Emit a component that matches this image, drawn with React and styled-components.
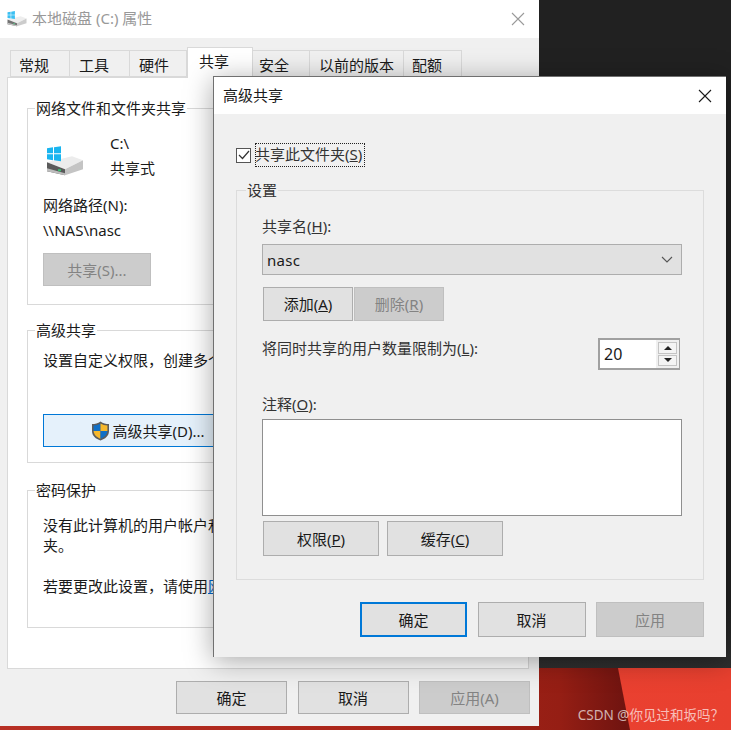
import React from "react";
import styled, { createGlobalStyle } from "styled-components";

const GlobalStyle = createGlobalStyle`
  html, body {
    margin: 0;
    padding: 0;
    background: #222;
  }
  * {
    box-sizing: border-box;
  }
`;

const Desktop = styled.div`
  position: relative;
  width: 731px;
  height: 730px;
  overflow: hidden;
  display: flex;
  flex-direction: column;
  justify-content: flex-end;
  background: linear-gradient(180deg, #212121 0, #212121 600px, #2f2f2f 668px);
  font-family: "Noto Sans", "Noto Sans CJK SC", sans-serif;
  font-size: 15px;
  line-height: 20px;
  color: #1a1a1a;
`;

const RedBand = styled.div`
  position: relative;
  height: 62px;
  background: linear-gradient(90deg, #b83025 0, #a92519 400px, #951e14 560px, #701410 625px);

  &::after {
    content: "";
    position: absolute;
    inset: 0;
    background: linear-gradient(90deg, #f44336, #e8402f);
    clip-path: polygon(618px 0, 100% 0, 100% 100%, 630px 100%);
  }
`;

const Watermark = styled.div`
  position: absolute;
  right: 7px;
  bottom: 5px;
  z-index: 3;
  font-size: 13.5px;
  white-space: nowrap;
  color: rgba(255, 255, 255, 0.68);
`;

const PropertiesWindow = styled.section`
  position: absolute;
  left: 0;
  top: 0;
  z-index: 1;
  width: 539px;
  height: 726px;
  display: flex;
  flex-direction: column;
  background: #f0f0f0;
`;

const AdvancedWindow = styled.section`
  position: absolute;
  left: 213px;
  top: 76px;
  z-index: 2;
  width: 513px;
  height: 581px;
  display: flex;
  flex-direction: column;
  background: #f0f0f0;
  border-left: 1px solid #707070;
  border-top: 1px solid #707070;
  box-shadow: 0 4px 26px rgba(0, 0, 0, 0.35);
`;

const TitleBar = styled.header`
  flex: none;
  height: ${(p) => p.$height}px;
  display: flex;
  align-items: center;
  gap: 5px;
  padding: 0 14px 0 ${(p) => p.$left}px;
  background: #fff;
  color: ${(p) => (p.$inactive ? "#999" : "#1a1a1a")};
`;

const TitleText = styled.span`
  flex: 1;
  margin-bottom: 2px;
`;

const CloseIcon = styled.svg`
  flex: none;
  width: 14px;
  height: 14px;
  stroke: ${(p) => (p.$inactive ? "#9a9a9a" : "#1a1a1a")};
  stroke-width: 1.1;
  fill: none;
`;

const TabStrip = styled.nav`
  flex: none;
  position: relative;
  z-index: 1;
  height: 31px;
  margin: 9px 0 0 10px;
  display: flex;
  align-items: flex-start;
`;

const Tab = styled.div`
  width: ${(p) => p.$width}px;
  height: ${(p) => (p.$active ? 31 : 27)}px;
  margin-top: ${(p) => (p.$active ? 0 : 3)}px;
  padding: ${(p) => (p.$active ? 3 : 4)}px 0 0 ${(p) => p.$indent}px;
  white-space: nowrap;
  background: ${(p) => (p.$active ? "#fff" : "#f0f0f0")};
  border: 1px solid #d9d9d9;
  border-left-width: ${(p) => (p.$first || p.$active ? 1 : 0)}px;
  border-bottom-width: ${(p) => (p.$active ? 0 : 1)}px;
`;

const TabPanel = styled.div`
  width: 522px;
  height: 592px;
  margin: -1px 0 0 7px;
  padding: 20px 10px 0 19px;
  display: flex;
  flex-direction: column;
  gap: 15px;
  background: #fff;
  border: 1px solid #d9d9d9;
`;

const Group = styled.fieldset`
  margin: ${(p) => p.$top || 0}px 0 0;
  height: ${(p) => p.$height}px;
  min-width: 0;
  padding: ${(p) => p.$pad || "0 0 0 15px"};
  border: 1px solid ${(p) => p.$line || "#d9d9d9"};
  overflow: hidden;
`;

const GroupTitle = styled.legend`
  margin-left: ${(p) => p.$left || -8}px;
  padding: 0 1px;
  height: 20px;
  line-height: 20px;
  color: ${(p) => p.$color || "#1a1a1a"};
`;

const DriveRow = styled.div`
  display: flex;
  align-items: flex-start;
  margin: 15px 0 0 3px;
  gap: 26px;
`;

const DriveSlot = styled.div`
  margin-top: 13px;
`;

const DriveLines = styled.div`
  display: flex;
  flex-direction: column;
  gap: 5px;
`;

const PathBlock = styled.div`
  display: flex;
  flex-direction: column;
  gap: 5px;
  margin-top: 17px;
`;

const Para = styled.p`
  margin: ${(p) => p.$top || 0}px 0 0;
  white-space: nowrap;
`;

const Link = styled.span`
  color: #0066cc;
  text-decoration: underline;
`;

const Button = styled.button`
  flex: none;
  width: ${(p) => p.$width}px;
  height: ${(p) => p.$height}px;
  margin: 0;
  padding: 0;
  display: flex;
  align-items: center;
  justify-content: center;
  font: inherit;
  color: #1a1a1a;
  background: #e1e1e1;
  border: 1px solid #adadad;

  &:disabled {
    color: #838383;
    background: #ccc;
    border-color: #bfbfbf;
  }
`;

const DefaultButton = styled(Button)`
  border: 2px solid #0078d7;
`;

const HoverButton = styled(Button)`
  background: #e5f1fb;
  border-color: #0078d7;
  gap: 2px;
  margin-top: 44px;
`;

const ButtonRow = styled.div`
  display: flex;
  gap: ${(p) => p.$gap}px;
  margin: ${(p) => p.$margin || 0};
  justify-content: ${(p) => p.$justify || "flex-start"};
`;

const WindowFooter = styled(ButtonRow)`
  margin: 12px 0 0;
  padding-right: 9px;
  justify-content: flex-end;
`;

const DialogBody = styled.div`
  flex: 1;
  padding: 29px 22px 0 22px;
  display: flex;
  flex-direction: column;
`;

const CheckRow = styled.div`
  display: flex;
  align-items: center;
  gap: 4px;
  height: 24px;
`;

const CheckBox = styled.span`
  flex: none;
  width: 15px;
  height: 15px;
  display: flex;
  align-items: center;
  justify-content: center;
  background: #fff;
  border: 1px solid #555;
`;

const FocusLabel = styled.span`
  padding: 1px 0 1px;
  height: 24px;
  width: 110px;
  line-height: 21px;
  white-space: nowrap;
  outline: 1px dotted #222;
  outline-offset: -1px;
  color: #333;
`;

const FieldLabel = styled.label`
  display: block;
  margin-top: ${(p) => p.$top}px;
  color: #333;
`;

const Select = styled.div`
  width: 420px;
  height: 31px;
  margin-top: 8px;
  padding: 0 8px 0 4px;
  display: flex;
  align-items: center;
  justify-content: space-between;
  background: #e1e1e1;
  border: 1px solid #adadad;
  letter-spacing: 0.3px;
`;

const LimitRow = styled.div`
  width: 418px;
  margin-top: 16px;
  display: flex;
  align-items: flex-start;
  justify-content: space-between;
  color: #333;
`;

const LimitLabel = styled.span`
  margin-top: 1px;
`;

const SpinBox = styled.div`
  width: 82px;
  height: 32px;
  margin-top: 1px;
  display: flex;
  align-items: stretch;
  background: #fff;
  border: 1px solid #a0a0a0;
  border-width: 2px 1px 2px 2px;
  color: #1a1a1a;
`;

const SpinValue = styled.span`
  flex: 1;
  padding: 4px 0 0 4px;
  font-size: 16px;
`;

const SpinColumn = styled.div`
  width: 23px;
  padding: 2px;
  display: flex;
  flex-direction: column;
  gap: 1px;
  background: #f0f0f0;
`;

const SpinArrow = styled.span`
  flex: 1;
  display: flex;
  align-items: center;
  justify-content: center;
  background: #f4f4f4;
  border: 1px solid #c4c4c4;

  &::before {
    content: "";
    border-left: 4px solid transparent;
    border-right: 4px solid transparent;
    ${(p) => (p.$down ? "border-top: 4px solid #222;" : "border-bottom: 4px solid #222;")}
  }
`;

const NoteArea = styled.div`
  width: 420px;
  height: 97px;
  margin-top: 5px;
  background: #fff;
  border: 1px solid #8f8f8f;
`;

const DriveIcon = ({ size, faded }) => (
  <svg width={size} height={size * 0.8} viewBox="0 0 38 30" opacity={faded ? 0.85 : 1} style={{ display: "block" }}>
    <path d="M1 16 L26 10 L37 14 L19 23 Z" fill="#ececec" />
    <path d="M1 16 L19 23 L19 29 L1 25 Z" fill="#5a5a5a" />
    <path d="M1 22 L19 27 L19 29 L1 25 Z" fill="#bdbdbd" />
    <path d="M19 23 L37 14 L37 23 L19 29 Z" fill="#c4c4c4" />
    <rect x="12" y="23" width="3" height="2" fill="#38c172" />
    <path d="M1 2 L7 1 L7 7 L1 7 Z M8 1 L15 0 L15 7 L8 7 Z M1 8 L7 8 L7 14 L1 13 Z M8 8 L15 8 L15 15 L8 14 Z" fill="#19b5f0" />
  </svg>
);

const ShieldIcon = () => (
  <svg width="19" height="20" viewBox="0 0 19 20">
    <path d="M9.5 0.5 C12 2.5 15 3 18 3 L18 10 C18 15 14 18 9.5 19.5 C5 18 1 15 1 10 L1 3 C4 3 7 2.5 9.5 0.5 Z" fill="#5c5c5c" />
    <path d="M9.5 2.5 L9.5 10 L2.6 10 L2.6 4.5 C5 4.4 7.5 3.8 9.5 2.5 Z" fill="#0f6fc6" />
    <path d="M9.5 2.5 C11.5 3.8 14 4.4 16.4 4.5 L16.4 10 L9.5 10 Z" fill="#f6b82c" />
    <path d="M2.6 10 L9.5 10 L9.5 17.7 C6 16.4 3 14.2 2.6 10 Z" fill="#f6b82c" />
    <path d="M9.5 10 L16.4 10 C16 14.2 13 16.4 9.5 17.7 Z" fill="#0f6fc6" />
  </svg>
);

const Close = ({ inactive }) => (
  <CloseIcon $inactive={inactive} viewBox="0 0 14 14">
    <path d="M1 1 L13 13 M13 1 L1 13" />
  </CloseIcon>
);

const tabs = [
  ["常规", 60, 8],
  ["工具", 60, 9],
  ["硬件", 57, 9],
  ["共享", 66, 11],
  ["安全", 57, 6],
  ["以前的版本", 94, 9],
  ["配额", 58, 8],
];

export default function App() {
  return (
    <Desktop>
      <GlobalStyle />
      <RedBand />
      <Watermark>CSDN @你见过和坂吗？</Watermark>

      <PropertiesWindow>
        <TitleBar $height={38} $left={7} $inactive>
          <DriveIcon size={20} faded />
          <TitleText>本地磁盘 (C:) 属性</TitleText>
          <Close inactive />
        </TitleBar>
        <TabStrip>
          {tabs.map(([label, width, indent], i) => (
            <Tab key={label} $width={width} $indent={indent} $first={i === 0} $active={label === "共享"}>
              {label}
            </Tab>
          ))}
        </TabStrip>
        <TabPanel>
          <Group $height={207}>
            <GroupTitle>网络文件和文件夹共享</GroupTitle>
            <DriveRow>
              <DriveSlot>
                <DriveIcon size={38} />
              </DriveSlot>
              <DriveLines>
                <span>C:\</span>
                <span>共享式</span>
              </DriveLines>
            </DriveRow>
            <PathBlock>
              <span>网络路径(N):</span>
              <span>\\NAS\nasc</span>
            </PathBlock>
            <ButtonRow $margin="13px 0 0">
              <Button $width={108} $height={33} disabled>共享(S)...</Button>
            </ButtonRow>
          </Group>
          <Group $height={143}>
            <GroupTitle>高级共享</GroupTitle>
            <Para $top={10}>设置自定义权限，创建多个</Para>
            <HoverButton $width={210} $height={33}>
              <ShieldIcon />
              高级共享(D)...
            </HoverButton>
          </Group>
          <Group $height={148} $top={2}>
            <GroupTitle>密码保护</GroupTitle>
            <Para $top={15}>
              没有此计算机的用户帐户和
              <br />
              夹。
            </Para>
            <Para $top={21}>
              若要更改此设置，请使用<Link>网</Link>
            </Para>
          </Group>
        </TabPanel>
        <WindowFooter $gap={10.5}>
          <Button $width={111} $height={33}>确定</Button>
          <Button $width={111} $height={33}>取消</Button>
          <Button $width={111} $height={33} disabled>应用(A)</Button>
        </WindowFooter>
      </PropertiesWindow>

      <AdvancedWindow>
        <TitleBar $height={37} $left={9}>
          <TitleText>高级共享</TitleText>
          <Close />
        </TitleBar>
        <DialogBody>
          <CheckRow>
            <CheckBox>
              <svg width="12" height="10" viewBox="0 0 12 10" fill="none" stroke="#333" strokeWidth="1.2">
                <path d="M1 5 L4.5 8.5 L11 1" />
              </svg>
            </CheckBox>
            <FocusLabel>共享此文件夹(<u>S</u>)</FocusLabel>
          </CheckRow>
          <Group $height={400} $top={13} $line="#dcdcdc" $pad="0 0 0 25px">
            <GroupTitle $left={-16} $color="#333">设置</GroupTitle>
            <FieldLabel $top={16}>共享名(<u>H</u>):</FieldLabel>
            <Select>
              nasc
              <svg width="12" height="7" viewBox="0 0 12 7" fill="none" stroke="#555" strokeWidth="1.1">
                <path d="M1 1 L6 6 L11 1" />
              </svg>
            </Select>
            <ButtonRow $gap={1} $margin="12px 0 0 1px">
              <Button $width={90} $height={34}>添加(<u>A</u>)</Button>
              <Button $width={90} $height={34} disabled>删除(<u>R</u>)</Button>
            </ButtonRow>
            <LimitRow>
              <LimitLabel>将同时共享的用户数量限制为(<u>L</u>):</LimitLabel>
              <SpinBox>
                <SpinValue>20</SpinValue>
                <SpinColumn>
                  <SpinArrow />
                  <SpinArrow $down />
                </SpinColumn>
              </SpinBox>
            </LimitRow>
            <FieldLabel $top={24}>注释(<u>O</u>):</FieldLabel>
            <NoteArea />
            <ButtonRow $gap={8} $margin="5px 0 0 1px">
              <Button $width={116} $height={35}>权限(<u>P</u>)</Button>
              <Button $width={116} $height={35}>缓存(<u>C</u>)</Button>
            </ButtonRow>
          </Group>
          <ButtonRow $gap={10.5} $justify="flex-end" $margin="22px 0 0">
            <DefaultButton $width={107} $height={35}>确定</DefaultButton>
            <Button $width={108} $height={35}>取消</Button>
            <Button $width={108} $height={35} disabled>应用</Button>
          </ButtonRow>
        </DialogBody>
      </AdvancedWindow>
    </Desktop>
  );
}
